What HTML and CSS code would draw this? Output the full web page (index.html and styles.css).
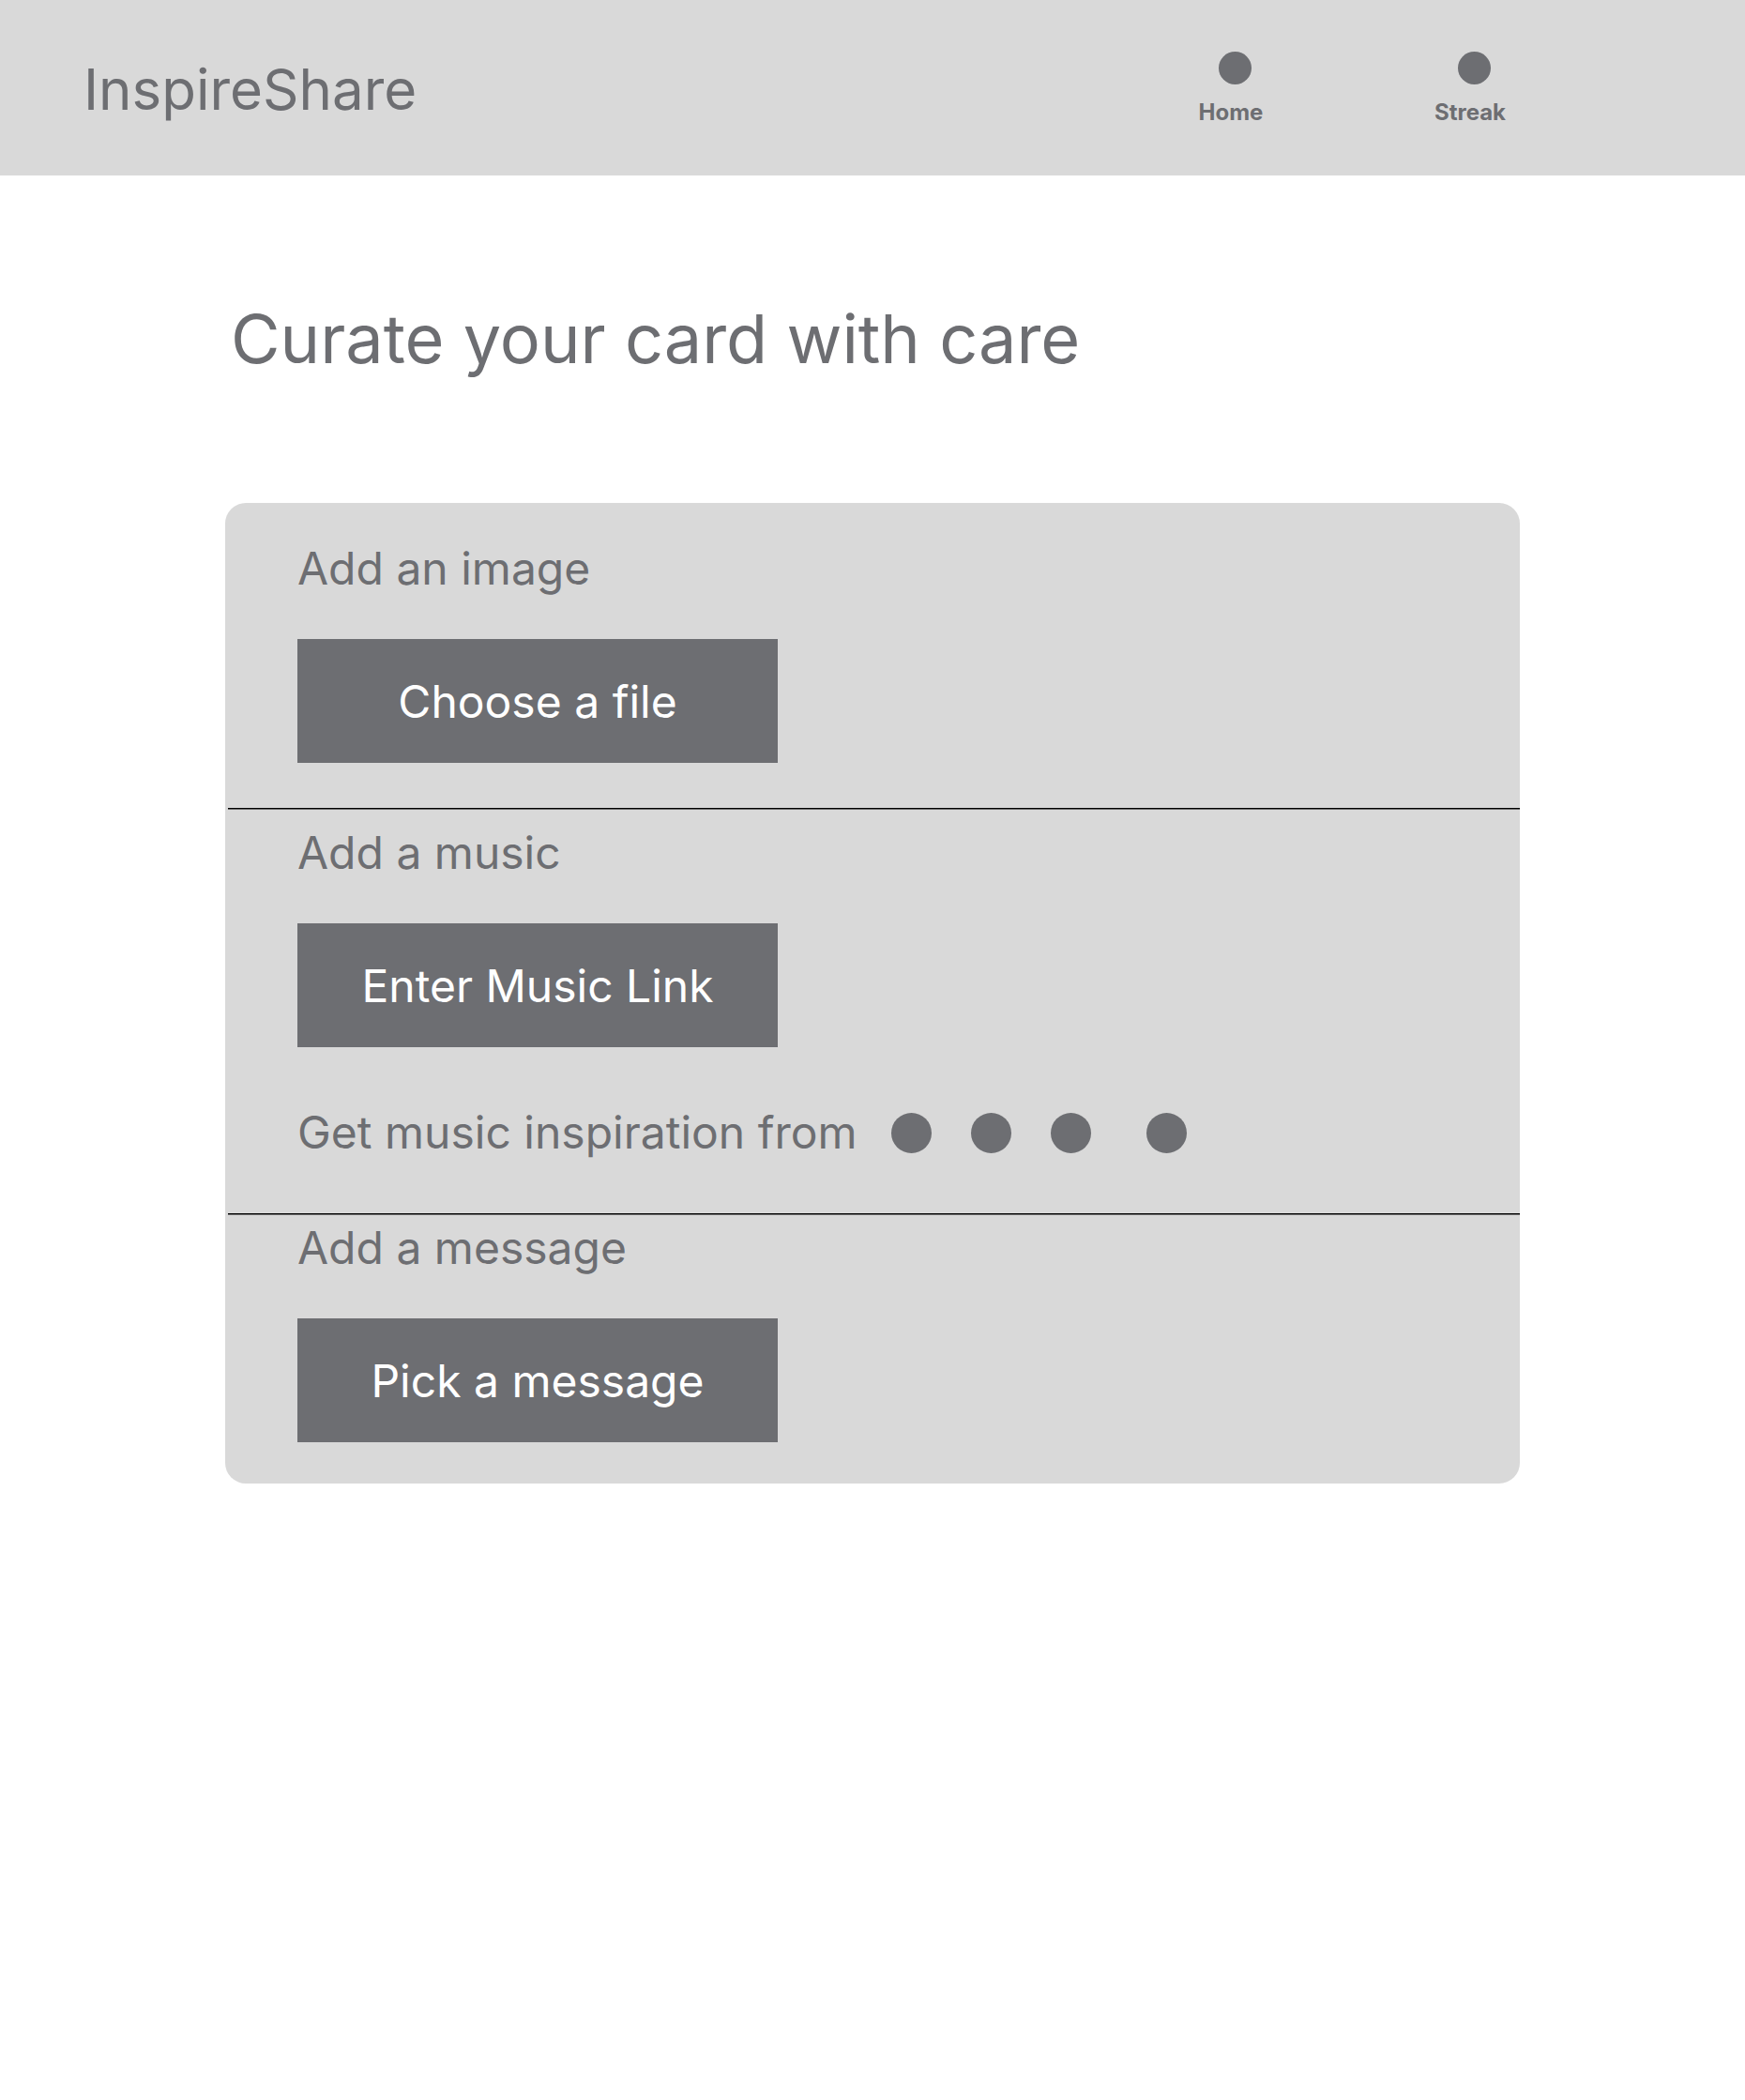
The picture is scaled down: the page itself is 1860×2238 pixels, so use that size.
FILE: index.html
```html
<!DOCTYPE html>
<html lang="en">
<head>
<meta charset="utf-8">
<title>InspireShare</title>
<link rel="stylesheet" href="styles.css">
</head>
<body>
<header class="topbar">
  <a class="brand" href="#">InspireShare</a>
  <nav class="nav">
    <a class="nav-link" href="#"><span class="nav-dot"></span>Home</a>
    <a class="nav-link" href="#"><span class="nav-dot"></span>Streak</a>
  </nav>
</header>
<main class="page">
  <h1 class="title">Curate your card with care</h1>
  <div class="card">
    <section class="section section-image">
      <h2 class="label">Add an image</h2>
      <button class="action" type="button">Choose a file</button>
    </section>
    <section class="section section-music">
      <h2 class="label">Add a music</h2>
      <button class="action" type="button">Enter Music Link</button>
      <div class="sources">
        <p class="label">Get music inspiration from</p>
        <ul class="source-list">
          <li><a class="source" href="#" aria-label="Source 1"></a></li>
          <li><a class="source" href="#" aria-label="Source 2"></a></li>
          <li><a class="source" href="#" aria-label="Source 3"></a></li>
          <li class="source-last"><a class="source" href="#" aria-label="Source 4"></a></li>
        </ul>
      </div>
    </section>
    <section class="section section-message">
      <h2 class="label">Add a message</h2>
      <button class="action" type="button">Pick a message</button>
    </section>
  </div>
</main>
</body>
</html>
```
FILE: styles.css
```css
* {
  box-sizing: border-box;
}

body {
  margin: 0;
  background: #fff;
  color: #6d6e72;
  font-family: Inter, "Liberation Sans", sans-serif;
}

a {
  color: inherit;
  text-decoration: none;
}

h1,
h2,
p,
ul {
  margin: 0;
  padding: 0;
  font-weight: 400;
}

.topbar {
  display: flex;
  justify-content: space-between;
  align-items: center;
  padding: 50px 239px 47px 89px;
  background: #d9d9d9;
}

.brand {
  font-size: 60px;
  line-height: 90px;
}

.nav {
  display: flex;
  gap: 147px;
}

.nav-link {
  display: flex;
  flex-direction: column;
  align-items: center;
  width: 108px;
  gap: 15px;
  font-size: 24px;
  font-weight: 700;
  line-height: 30px;
}

.nav-dot {
  width: 35px;
  height: 35px;
  margin-left: 9px;
  border-radius: 50%;
  background: #6d6e72;
}

.page {
  padding: 130px 240px;
}

.title {
  padding-left: 6px;
  font-size: 72px;
  line-height: 88px;
}

.card {
  margin-top: 131px;
  border-radius: 22px;
  background: #d9d9d9;
}

.section {
  margin-left: 3px;
  padding: 0 74px;
}

.label {
  font-size: 48px;
  line-height: 58px;
}

.action {
  display: block;
  width: 512px;
  height: 132px;
  margin-top: 46px;
  border: 0;
  background: #6d6e72;
  color: #fff;
  font: inherit;
  font-size: 48px;
}

.section-image {
  padding-top: 41px;
  padding-bottom: 48px;
}

/* Dark rule with a softer lower edge */
.section-music,
.section-message {
  border-top: 1px solid #000;
  box-shadow: inset 0 1px #6d6d6d;
}

.section-music {
  padding-top: 18px;
  padding-bottom: 57px;
}

.section-message {
  padding-top: 7px;
  padding-bottom: 44px;
}

.sources {
  display: flex;
  align-items: center;
  gap: 36px;
  margin-top: 62px;
}

.source-list {
  display: flex;
  gap: 42px;
  list-style: none;
}

.source {
  display: block;
  width: 43px;
  height: 43px;
  border-radius: 50%;
  background: #6d6e72;
}

.source-last {
  margin-left: 17px;
}
```
